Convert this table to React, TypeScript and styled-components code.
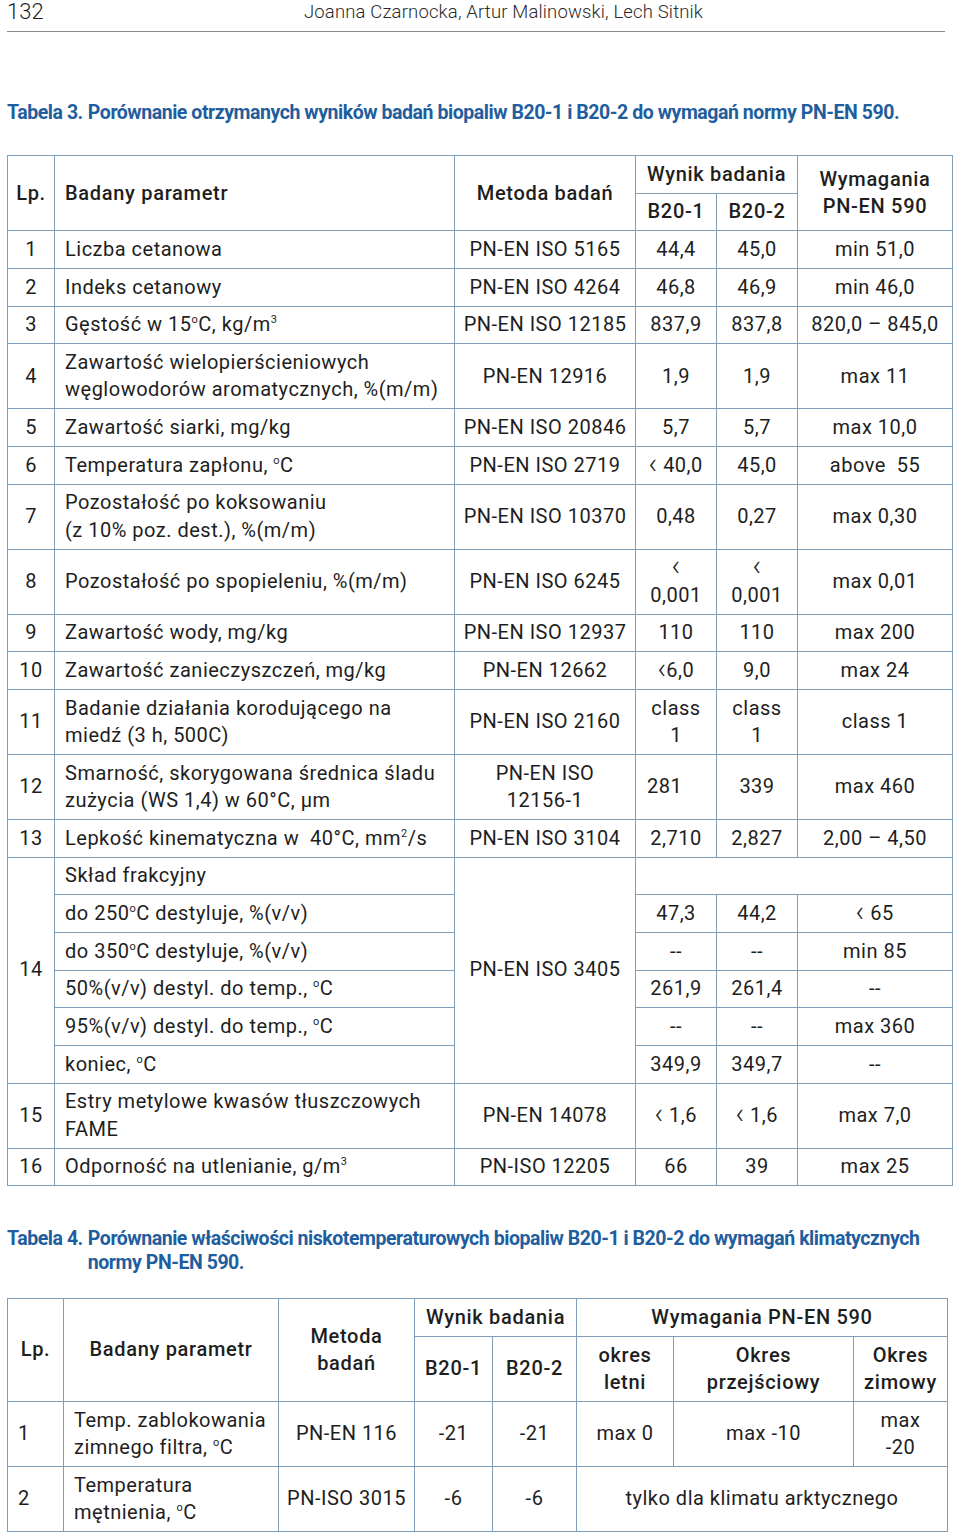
import React, { ReactNode } from "react";
import styled, { createGlobalStyle } from "styled-components";

const GlobalStyle = createGlobalStyle`
  html, body {
    margin: 0;
    padding: 0;
    background: #ffffff;
  }
  body {
    font-family: Roboto, "Liberation Sans", Arial, sans-serif;
    color: #1e1e1e;
  }
`;

const Page = styled.div`
  width: 960px;
  box-sizing: border-box;
  padding: 0 8px 6px 7px;
`;

const RunningHead = styled.header`
  width: 938px;
  height: 32px;
  box-sizing: border-box;
  border-bottom: 1px solid #8c8c8c;
  display: flex;
  align-items: center;
`;

const PageNo = styled.span`
  font-size: 22px;
  font-weight: 300;
  line-height: 24px;
  width: 297px;
  margin-top: -8px;
`;

const Authors = styled.span`
  font-size: 18.5px;
  font-weight: 300;
  letter-spacing: 0.15px;
  color: #2a2a2a;
  margin-top: -8px;
`;

const Caption = styled.div<{ $top: number }>`
  display: flex;
  margin-top: ${(p) => p.$top}px;
  color: #1f5e9e;
  font-size: 19.5px;
  font-weight: 700;
  line-height: 24px;
  letter-spacing: -0.45px;
`;

const CaptionLabel = styled.span`
  flex: 0 0 auto;
  margin-right: 5px;
  white-space: nowrap;
`;

const CaptionText = styled.span`
  flex: 1;
  white-space: nowrap;
`;

const Table = styled.table<{ $top: number; $width: number }>`
  margin-top: ${(p) => p.$top}px;
  width: ${(p) => p.$width}px;
  border-collapse: collapse;
  table-layout: fixed;
  font-size: 20px;
  line-height: 27.3px;
`;

const Cell = styled.td<{ $align?: "left" | "center"; $padLeft?: number }>`
  border: 1px solid #7f9cb8;
  padding: 4.7px 3px 4.7px ${(p) => p.$padLeft ?? 3}px;
  text-align: ${(p) => p.$align ?? "center"};
  vertical-align: middle;
  white-space: nowrap;
  font-weight: 400;
  letter-spacing: 0.5px;
`;

const Head = styled(Cell).attrs({ as: "th" })`
  font-weight: 500;
  letter-spacing: 0.7px;
`;

const Sup = styled.sup`
  font-size: 0.55em;
  line-height: 0;
  vertical-align: 0.75em;
`;

const Lt = styled.span`
  display: inline-block;
  font-weight: 300;
  transform: scale(1.45);
  transform-origin: 50% 62%;
  margin: 0 1px;
`;

type Row3 = {
  lp: string;
  param: ReactNode;
  method: ReactNode;
  b1: ReactNode;
  b2: ReactNode;
  req: ReactNode;
  b1Left?: boolean;
};

const o = <Sup>o</Sup>;
const lt = <Lt>‹</Lt>;

const rowsTop: Row3[] = [
  { lp: "1", param: "Liczba cetanowa", method: "PN-EN ISO 5165", b1: "44,4", b2: "45,0", req: "min 51,0" },
  { lp: "2", param: "Indeks cetanowy", method: "PN-EN ISO 4264", b1: "46,8", b2: "46,9", req: "min 46,0" },
  {
    lp: "3",
    param: <>Gęstość w 15{o}C, kg/m<Sup>3</Sup></>,
    method: "PN-EN ISO 12185",
    b1: "837,9",
    b2: "837,8",
    req: "820,0 – 845,0",
  },
  {
    lp: "4",
    param: <>Zawartość wielopierścieniowych<br />węglowodorów aromatycznych, %(m/m)</>,
    method: "PN-EN 12916",
    b1: "1,9",
    b2: "1,9",
    req: "max 11",
  },
  { lp: "5", param: "Zawartość siarki, mg/kg", method: "PN-EN ISO 20846", b1: "5,7", b2: "5,7", req: "max 10,0" },
  {
    lp: "6",
    param: <>Temperatura zapłonu, {o}C</>,
    method: "PN-EN ISO 2719",
    b1: <>{lt} 40,0</>,
    b2: "45,0",
    req: "above\u00a0 55",
  },
  {
    lp: "7",
    param: <>Pozostałość po koksowaniu<br />(z 10% poz. dest.), %(m/m)</>,
    method: "PN-EN ISO 10370",
    b1: "0,48",
    b2: "0,27",
    req: "max 0,30",
  },
  {
    lp: "8",
    param: "Pozostałość po spopieleniu, %(m/m)",
    method: "PN-EN ISO 6245",
    b1: <>{lt}<br />0,001</>,
    b2: <>{lt}<br />0,001</>,
    req: "max 0,01",
  },
  { lp: "9", param: "Zawartość wody, mg/kg", method: "PN-EN ISO 12937", b1: "110", b2: "110", req: "max 200" },
  { lp: "10", param: "Zawartość zanieczyszczeń, mg/kg", method: "PN-EN 12662", b1: <>{lt}6,0</>, b2: "9,0", req: "max 24" },
  {
    lp: "11",
    param: <>Badanie działania korodującego na<br />miedź (3 h, 500C)</>,
    method: "PN-EN ISO 2160",
    b1: <>class<br />1</>,
    b2: <>class<br />1</>,
    req: "class 1",
  },
  {
    lp: "12",
    param: <>Smarność, skorygowana średnica śladu<br />zużycia (WS 1,4) w 60°C, µm</>,
    method: <>PN-EN ISO<br />12156-1</>,
    b1: "281",
    b2: "339",
    req: "max 460",
    b1Left: true,
  },
  {
    lp: "13",
    param: <>Lepkość kinematyczna w&nbsp; 40°C, mm<Sup>2</Sup>/s</>,
    method: "PN-EN ISO 3104",
    b1: "2,710",
    b2: "2,827",
    req: "2,00 – 4,50",
  },
];

const fraction: { param: ReactNode; b1: string; b2: string; req: ReactNode }[] = [
  { param: <>do 250{o}C destyluje, %(v/v)</>, b1: "47,3", b2: "44,2", req: <>{lt} 65</> },
  { param: <>do 350{o}C destyluje, %(v/v)</>, b1: "--", b2: "--", req: "min 85" },
  { param: <>50%(v/v) destyl. do temp., {o}C</>, b1: "261,9", b2: "261,4", req: "--" },
  { param: <>95%(v/v) destyl. do temp., {o}C</>, b1: "--", b2: "--", req: "max 360" },
  { param: <>koniec, {o}C</>, b1: "349,9", b2: "349,7", req: "--" },
];

const rowsBottom: Row3[] = [
  {
    lp: "15",
    param: <>Estry metylowe kwasów tłuszczowych<br />FAME</>,
    method: "PN-EN 14078",
    b1: <>{lt} 1,6</>,
    b2: <>{lt} 1,6</>,
    req: "max 7,0",
  },
  {
    lp: "16",
    param: <>Odporność na utlenianie, g/m<Sup>3</Sup></>,
    method: "PN-ISO 12205",
    b1: "66",
    b2: "39",
    req: "max 25",
  },
];

const SimpleRow = ({ r }: { r: Row3 }) => (
  <tr>
    <Cell>{r.lp}</Cell>
    <Cell $align="left" $padLeft={10}>{r.param}</Cell>
    <Cell>{r.method}</Cell>
    {r.b1Left ? (
      <Cell $align="left" $padLeft={11}>{r.b1}</Cell>
    ) : (
      <Cell>{r.b1}</Cell>
    )}
    <Cell>{r.b2}</Cell>
    <Cell>{r.req}</Cell>
  </tr>
);

const ResultsTable = () => (
  <Table $top={30} $width={945}>
    <colgroup>
      <col style={{ width: 47 }} />
      <col style={{ width: 400 }} />
      <col style={{ width: 181 }} />
      <col style={{ width: 81 }} />
      <col style={{ width: 81 }} />
      <col style={{ width: 155 }} />
    </colgroup>
    <thead>
      <tr>
        <Head rowSpan={2}>Lp.</Head>
        <Head rowSpan={2} $align="left" $padLeft={10}>Badany parametr</Head>
        <Head rowSpan={2}>Metoda badań</Head>
        <Head colSpan={2}>Wynik badania</Head>
        <Head rowSpan={2}>Wymagania<br />PN-EN 590</Head>
      </tr>
      <tr>
        <Head>B20-1</Head>
        <Head>B20-2</Head>
      </tr>
    </thead>
    <tbody>
      {rowsTop.map((r) => (
        <SimpleRow key={r.lp} r={r} />
      ))}
      <tr>
        <Cell rowSpan={6}>14</Cell>
        <Cell $align="left" $padLeft={10}>Skład frakcyjny</Cell>
        <Cell rowSpan={6}>PN-EN ISO 3405</Cell>
        <Cell colSpan={3} />
      </tr>
      {fraction.map((f, i) => (
        <tr key={i}>
          <Cell $align="left" $padLeft={10}>{f.param}</Cell>
          <Cell>{f.b1}</Cell>
          <Cell>{f.b2}</Cell>
          <Cell>{f.req}</Cell>
        </tr>
      ))}
      {rowsBottom.map((r) => (
        <SimpleRow key={r.lp} r={r} />
      ))}
    </tbody>
  </Table>
);

const LowTempTable = () => (
  <Table $top={23} $width={940}>
    <colgroup>
      <col style={{ width: 56 }} />
      <col style={{ width: 215 }} />
      <col style={{ width: 136 }} />
      <col style={{ width: 78 }} />
      <col style={{ width: 84 }} />
      <col style={{ width: 97 }} />
      <col style={{ width: 180 }} />
      <col style={{ width: 94 }} />
    </colgroup>
    <thead>
      <tr>
        <Head rowSpan={2}>Lp.</Head>
        <Head rowSpan={2}>Badany parametr</Head>
        <Head rowSpan={2}>Metoda<br />badań</Head>
        <Head colSpan={2}>Wynik badania</Head>
        <Head colSpan={3}>Wymagania PN-EN 590</Head>
      </tr>
      <tr>
        <Head>B20-1</Head>
        <Head>B20-2</Head>
        <Head>okres<br />letni</Head>
        <Head>Okres<br />przejściowy</Head>
        <Head>Okres<br />zimowy</Head>
      </tr>
    </thead>
    <tbody>
      <tr>
        <Cell $align="left" $padLeft={10}>1</Cell>
        <Cell $align="left" $padLeft={10}>Temp. zablokowania<br />zimnego filtra, {o}C</Cell>
        <Cell>PN-EN 116</Cell>
        <Cell>-21</Cell>
        <Cell>-21</Cell>
        <Cell>max 0</Cell>
        <Cell>max -10</Cell>
        <Cell>max<br />-20</Cell>
      </tr>
      <tr>
        <Cell $align="left" $padLeft={10}>2</Cell>
        <Cell $align="left" $padLeft={10}>Temperatura<br />mętnienia, {o}C</Cell>
        <Cell>PN-ISO 3015</Cell>
        <Cell>-6</Cell>
        <Cell>-6</Cell>
        <Cell colSpan={3}>tylko dla klimatu arktycznego</Cell>
      </tr>
    </tbody>
  </Table>
);

export default function App() {
  return (
    <Page>
      <GlobalStyle />
      <RunningHead>
        <PageNo>132</PageNo>
        <Authors>Joanna Czarnocka, Artur Malinowski, Lech Sitnik</Authors>
      </RunningHead>
      <Caption $top={69}>
        <CaptionLabel>Tabela 3.</CaptionLabel>
        <CaptionText>
          Porównanie otrzymanych wyników badań biopaliw B20-1 i B20-2 do wymagań normy PN-EN 590.
        </CaptionText>
      </Caption>
      <ResultsTable />
      <Caption $top={41}>
        <CaptionLabel>Tabela 4.</CaptionLabel>
        <CaptionText>
          Porównanie właściwości niskotemperaturowych biopaliw B20-1 i B20-2 do wymagań klimatycznych
          <br />
          normy PN-EN 590.
        </CaptionText>
      </Caption>
      <LowTempTable />
    </Page>
  );
}
